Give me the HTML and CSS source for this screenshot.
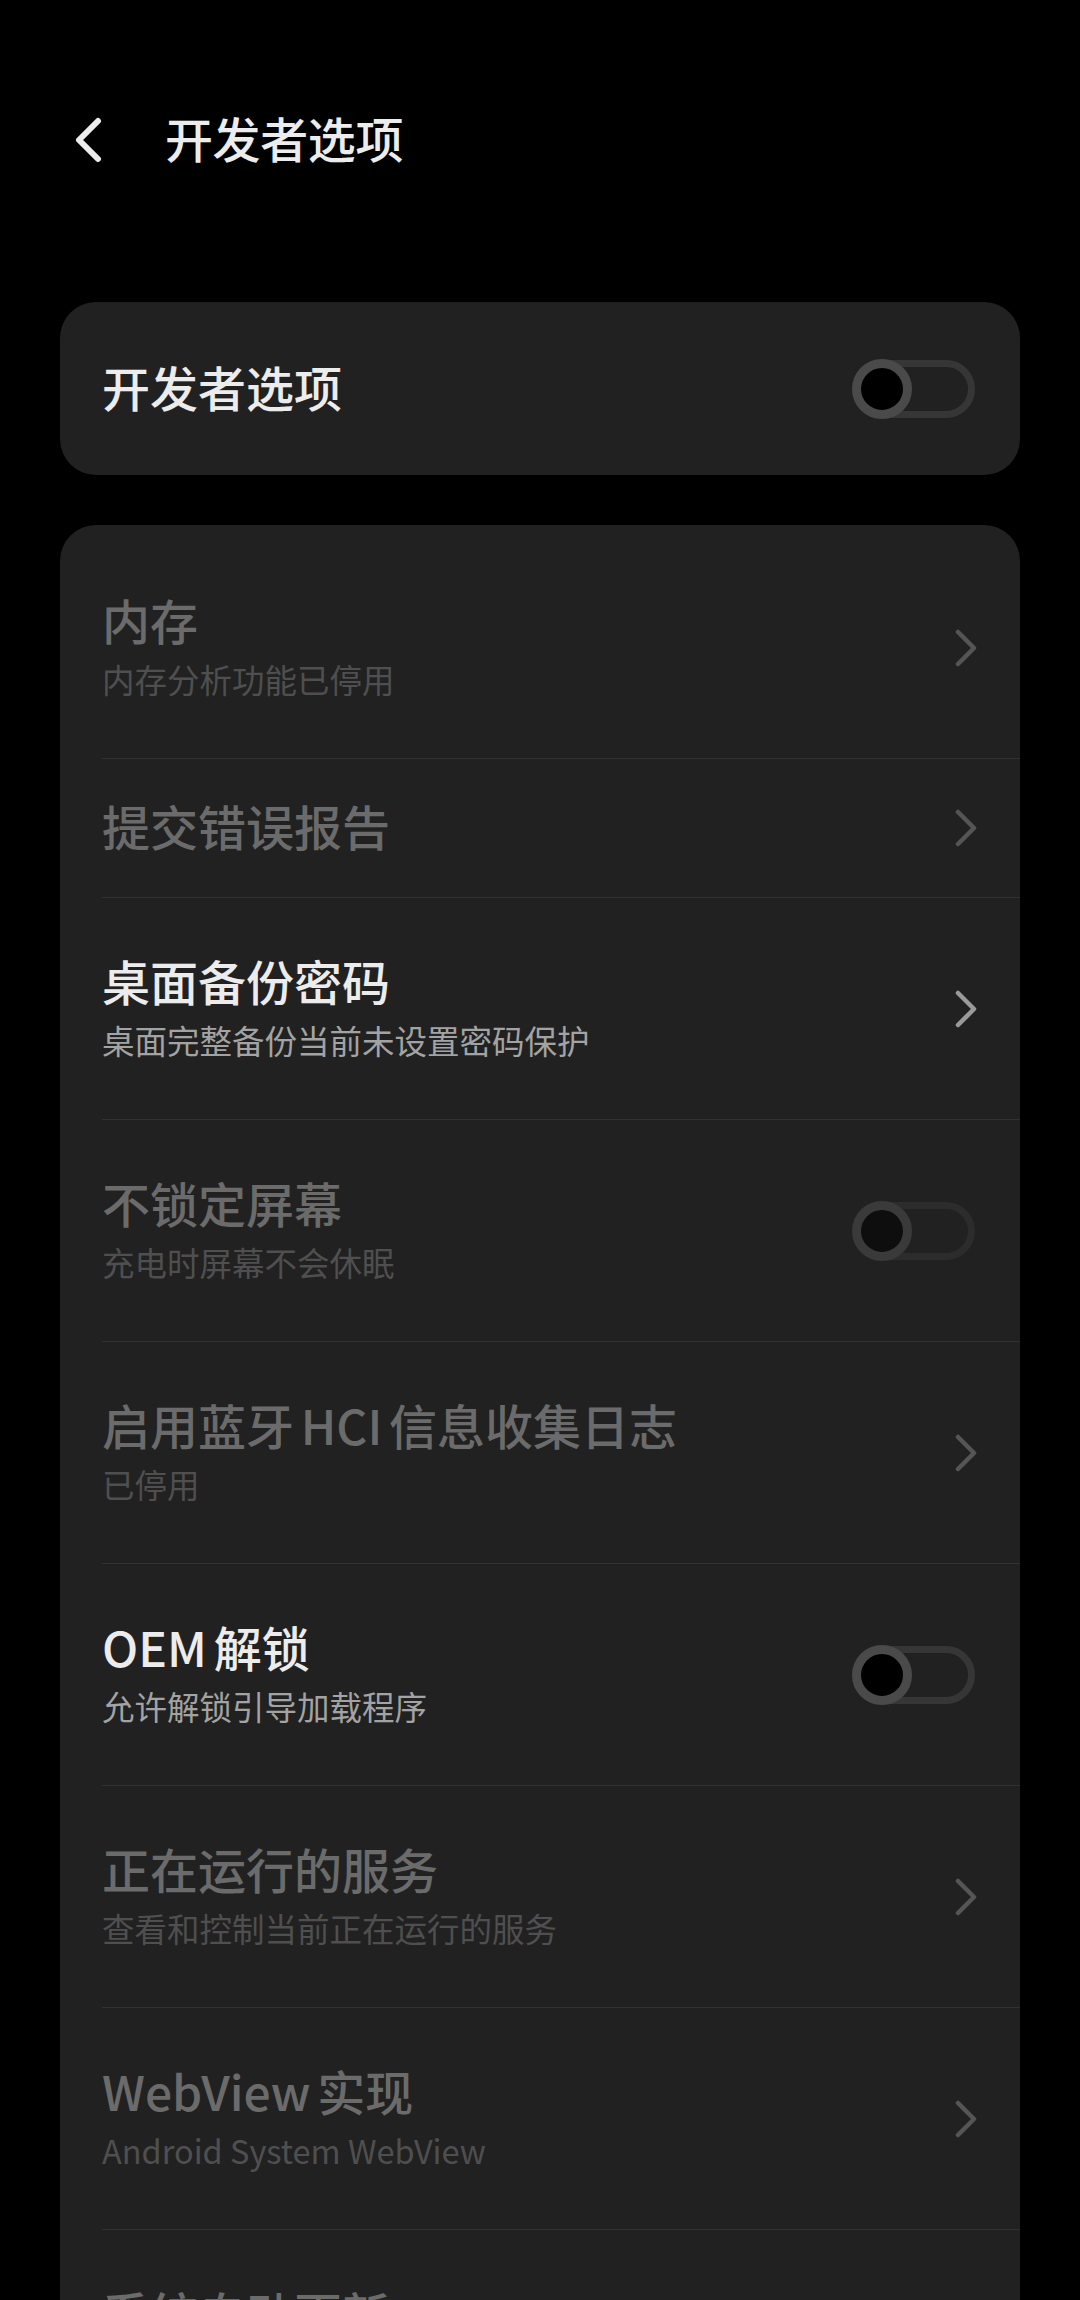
FILE: index.html
```html
<!DOCTYPE html>
<html lang="zh-CN">
<head>
<meta charset="utf-8">
<title>开发者选项</title>
<link rel="stylesheet" href="styles.css">
</head>
<body>
<div class="screen">
  <header class="topbar">
    <svg class="back" width="30" height="46" viewBox="0 0 30 46"><polyline points="25,4 6,23 25,42" fill="none" stroke="#ececec" stroke-width="6" stroke-linecap="round" stroke-linejoin="round"/></svg>
    <h1 class="page-title">开发者选项</h1>
  </header>

  <section class="card card-master">
    <div class="master-label">开发者选项</div>
    <div class="toggle"><span class="knob"></span></div>
  </section>

  <section class="card card-list">
    <div class="row row-first dim">
      <div class="text"><div class="title">内存</div><div class="sub">内存分析功能已停用</div></div>
      <svg class="chev" width="24" height="38" viewBox="0 0 24 38"><polyline points="4,3 20,19 4,35" fill="none" stroke-width="4.5" stroke-linecap="round" stroke-linejoin="round"/></svg>
    </div>
    <div class="row row-single dim">
      <div class="text"><div class="title">提交错误报告</div></div>
      <svg class="chev" width="24" height="38" viewBox="0 0 24 38"><polyline points="4,3 20,19 4,35" fill="none" stroke-width="4.5" stroke-linecap="round" stroke-linejoin="round"/></svg>
    </div>
    <div class="row">
      <div class="text"><div class="title">桌面备份密码</div><div class="sub">桌面完整备份当前未设置密码保护</div></div>
      <svg class="chev" width="24" height="38" viewBox="0 0 24 38"><polyline points="4,3 20,19 4,35" fill="none" stroke-width="4.5" stroke-linecap="round" stroke-linejoin="round"/></svg>
    </div>
    <div class="row dim">
      <div class="text"><div class="title">不锁定屏幕</div><div class="sub">充电时屏幕不会休眠</div></div>
      <div class="toggle toggle-dim"><span class="knob"></span></div>
    </div>
    <div class="row dim">
      <div class="text"><div class="title tight">启用蓝牙 HCI 信息收集日志</div><div class="sub">已停用</div></div>
      <svg class="chev" width="24" height="38" viewBox="0 0 24 38"><polyline points="4,3 20,19 4,35" fill="none" stroke-width="4.5" stroke-linecap="round" stroke-linejoin="round"/></svg>
    </div>
    <div class="row">
      <div class="text"><div class="title tight">OEM 解锁</div><div class="sub">允许解锁引导加载程序</div></div>
      <div class="toggle"><span class="knob"></span></div>
    </div>
    <div class="row dim">
      <div class="text"><div class="title">正在运行的服务</div><div class="sub">查看和控制当前正在运行的服务</div></div>
      <svg class="chev" width="24" height="38" viewBox="0 0 24 38"><polyline points="4,3 20,19 4,35" fill="none" stroke-width="4.5" stroke-linecap="round" stroke-linejoin="round"/></svg>
    </div>
    <div class="row dim">
      <div class="text"><div class="title tight">WebView 实现</div><div class="sub">Android System WebView</div></div>
      <svg class="chev" width="24" height="38" viewBox="0 0 24 38"><polyline points="4,3 20,19 4,35" fill="none" stroke-width="4.5" stroke-linecap="round" stroke-linejoin="round"/></svg>
    </div>
    <div class="row row-cut dim">
      <div class="text"><div class="title">系统自动更新</div></div>
    </div>
  </section>
</div>
</body>
</html>
```

FILE: styles.css
```css
* { box-sizing: border-box; }
html, body {
  margin: 0;
  padding: 0;
  background: #000;
}
body {
  font-family: "Noto Sans CJK SC", "Noto Sans", sans-serif;
  color: #ececec;
}
.screen {
  width: 1080px;
  height: 2300px;
  overflow: hidden;
  background: #000;
}
.topbar {
  display: flex;
  align-items: center;
  height: 120px;
  margin-top: 80px;
  padding-left: 73px;
}
.back { display: block; }
.page-title {
  margin: -6px 0 0 62px;
  font-size: 48px;
  font-weight: 500;
  line-height: 62px;
  color: #ececec;
  letter-spacing: -0.4px;
}
.card {
  margin: 0 60px;
  background: #212121;
  border-radius: 36px;
}
.card-master {
  margin-top: 102px;
  height: 173px;
  display: flex;
  align-items: center;
  justify-content: space-between;
  padding: 0 45px 0 42px;
}
.master-label {
  margin-top: -6px;
  font-size: 48px;
  font-weight: 500;
  line-height: 62px;
  color: #ececec;
}
.card-list {
  margin-top: 50px;
  padding: 12px 0 0 42px;
  border-radius: 36px 36px 0 0;
}
.row {
  display: flex;
  align-items: center;
  justify-content: space-between;
  padding: 57px 42px 57px 0;
  border-bottom: 1px solid #323232;
}
.row-single { padding-top: 41px; padding-bottom: 41px; }
.row-cut { border-bottom: none; }
.text {
  display: flex;
  flex-direction: column;
  margin-top: -6px;
}
.title {
  font-size: 48px;
  font-weight: 500;
  line-height: 62px;
  color: #ececec;
  white-space: nowrap;
}
.title.tight { word-spacing: -4px; }
.sub {
  margin-top: 7px;
  font-size: 32.5px;
  line-height: 44px;
  color: #a3a3a3;
  white-space: nowrap;
}
.dim .title { color: #6b6b6b; }
.dim .sub { color: #4f4f4f; }
.chev { display: block; stroke: #9a9a9a; }
.dim .chev { stroke: #555; }

.toggle {
  position: relative;
  width: 122px;
  height: 58px;
  margin-right: 3px;
  border: 7px solid #363636;
  border-radius: 29px;
  flex: none;
}
.card-master .toggle { margin-right: 0; }
.knob {
  position: absolute;
  left: -8px;
  top: -8px;
  width: 60px;
  height: 60px;
  border-radius: 50%;
  border: 9px solid #4a4a4a;
  background: #000;
}
.toggle-dim { border-color: #2c2c2c; }
.toggle-dim .knob { border-color: #3a3a3a; background: #0e0e0e; }
```
